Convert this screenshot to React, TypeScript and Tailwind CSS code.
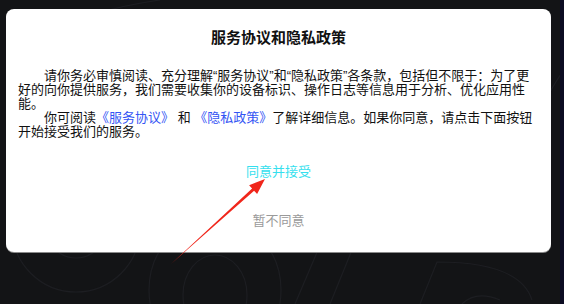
export default function App() {
  const font = {
    fontFamily:
      '"Liberation Sans", "Noto Sans CJK SC", "Noto Sans", sans-serif',
  };

  return (
    <div
      className="relative flex w-[564px] h-[304px] overflow-hidden bg-[#131416]"
      style={font}
    >
      {/* faint background pattern */}
      <svg
        className="absolute inset-0"
        width="564"
        height="304"
        viewBox="0 0 564 304"
        fill="none"
      >
        <g stroke="#1d1e22" strokeWidth="1.2">
          <circle cx="76" cy="228" r="64" />
          <circle cx="76" cy="228" r="30" />
          <ellipse cx="215" cy="290" rx="66" ry="72" />
          <ellipse cx="215" cy="295" rx="32" ry="40" />
          <path d="M295 304 L318 250" />
          <path d="M330 304 L352 250" />
          <path d="M420 304 L437 262 Q520 262 532 300" />
          <path d="M462 304 Q476 290 500 300" />
          <path d="M20 40 Q90 10 160 0" />
          <path d="M540 110 Q556 80 564 70" />
        </g>
      </svg>

      <div className="relative flex-1">
        {/* dialog card */}
        <div className="mt-[9px] ml-[6px] w-[545px] h-[243px] rounded-lg bg-white shadow-[0_1px_0_#8a8a8a] flex flex-col">
          <h1 className="pt-[18px] text-center text-[15px] leading-[22px] font-bold text-[#111]">
            服务协议和隐私政策
          </h1>

          <div className="mt-[20px] pl-[12px] pr-[14px] text-[13px] leading-[14px] text-[#111]">
            <p className="indent-[26px]">
              请你务必审慎阅读、充分理解“服务协议”和“隐私政策”各条款，包括但不限于：为了更好的向你提供服务，我们需要收集你的设备标识、操作日志等信息用于分析、优化应用性能。
            </p>
            <p className="indent-[26px]">
              你可阅读<span className="text-[#3354f4]">《服务协议》</span> 和{" "}
              <span className="text-[#3354f4]">《隐私政策》</span>了解详细信息。如果你同意，请点击下面按钮开始接受我们的服务。
            </p>
          </div>

          <button className="mt-[23px] self-center text-[13px] leading-[20px] text-[#35dfee]">
            同意并接受
          </button>
          <button className="mt-[29px] self-center text-[13px] leading-[20px] text-[#9a9a9a]">
            暂不同意
          </button>
        </div>
      </div>

      <div className="relative w-[4px] bg-[#0c0c22]" />

      {/* annotation arrow */}
      <svg
        className="absolute inset-0 pointer-events-none"
        width="564"
        height="304"
        viewBox="0 0 564 304"
      >
        <polygon
          points="171,264 252.1,188.6 249.1,185.3 265,179 257.1,194.1 254.1,190.8"
          fill="#f0261b"
        />
      </svg>
    </div>
  );
}
